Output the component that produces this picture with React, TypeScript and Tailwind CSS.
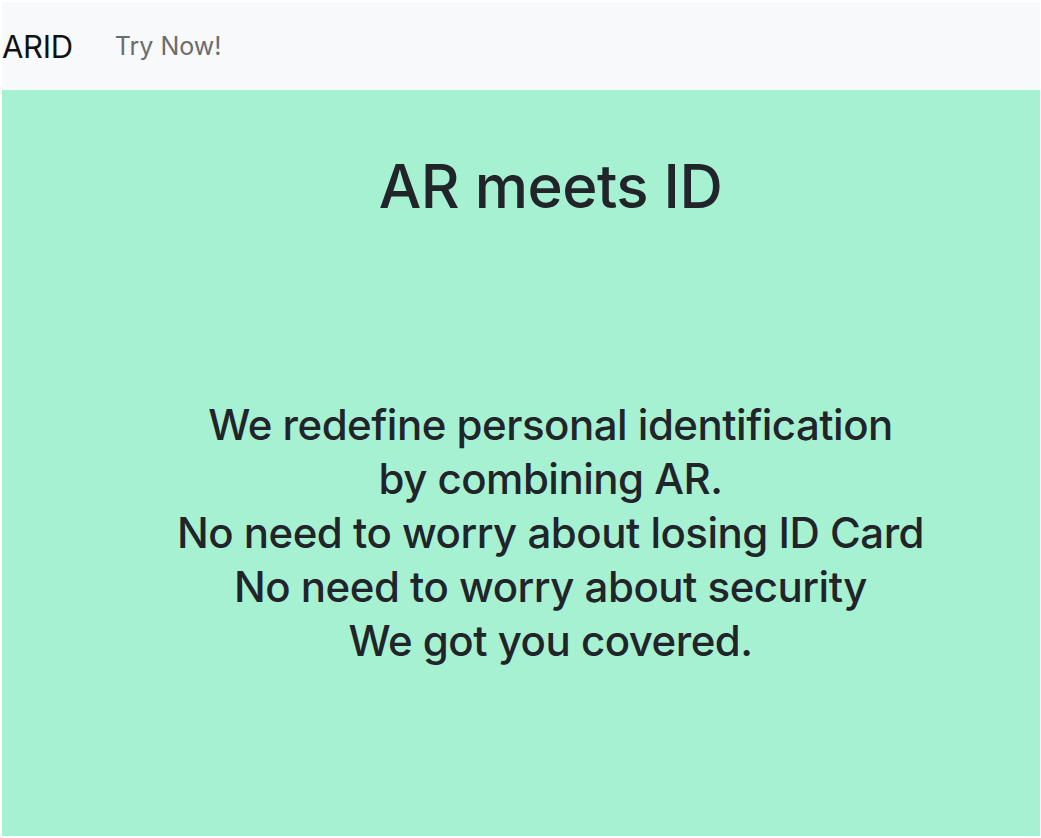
export default function App() {
  return (
    <div
      className="min-h-[838px] bg-white pl-[2px] pt-[2px] pr-[1px] pb-[2px] text-[#212529]"
      style={{ fontFamily: "Inter, 'Noto Sans', sans-serif" }}
    >
      <nav className="flex h-[88px] items-center bg-[#f8f9fa]">
        <span className="text-[31px] leading-none tracking-[-0.3px] text-[#111]">ARID</span>
        <a className="ml-[42px] text-[25px] leading-none text-[#6c6c6c]">Try Now!</a>
      </nav>
      <main className="flex h-[746px] flex-col items-center bg-[#a7f1d3] pl-[59px] text-center">
        <h1 className="mt-[60px] text-[60px] font-medium leading-[1.2] tracking-[-0.5px]">AR meets ID</h1>
        <div className="mt-[176px] text-[42px] font-medium leading-[54px] tracking-[-0.5px]">
          <p>We redefine personal identification</p>
          <p>by combining AR.</p>
          <p>No need to worry about losing ID Card</p>
          <p>No need to worry about security</p>
          <p>We got you covered.</p>
        </div>
      </main>
    </div>
  );
}
